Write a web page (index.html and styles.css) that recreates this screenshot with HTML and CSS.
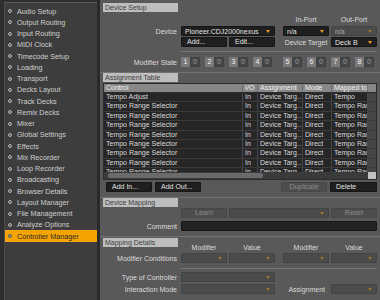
FILE: index.html
```html
<!DOCTYPE html>
<html>
<head>
<meta charset="utf-8">
<link rel="stylesheet" href="styles.css">
</head>
<body>
<div class="app">
  <aside class="side">
    <ul class="menu">
      <li class="item"><span class="dot"></span>Audio Setup</li>
      <li class="item"><span class="dot"></span>Output Routing</li>
      <li class="item"><span class="dot"></span>Input Routing</li>
      <li class="item"><span class="dot"></span>MIDI Clock</li>
      <li class="item"><span class="dot"></span>Timecode Setup</li>
      <li class="item"><span class="dot"></span>Loading</li>
      <li class="item"><span class="dot"></span>Transport</li>
      <li class="item"><span class="dot"></span>Decks Layout</li>
      <li class="item"><span class="dot"></span>Track Decks</li>
      <li class="item"><span class="dot"></span>Remix Decks</li>
      <li class="item"><span class="dot"></span>Mixer</li>
      <li class="item"><span class="dot"></span>Global Settings</li>
      <li class="item"><span class="dot"></span>Effects</li>
      <li class="item"><span class="dot"></span>Mix Recorder</li>
      <li class="item"><span class="dot"></span>Loop Recorder</li>
      <li class="item"><span class="dot"></span>Broadcasting</li>
      <li class="item"><span class="dot"></span>Browser Details</li>
      <li class="item"><span class="dot"></span>Layout Manager</li>
      <li class="item"><span class="dot"></span>File Management</li>
      <li class="item"><span class="dot"></span>Analyze Options</li>
      <li class="item active"><span class="dot"></span>Controller Manager</li>
    </ul>
  </aside>
  <div class="divider"></div>
  <main class="main">
    <section class="sec">
      <h2 class="title">Device Setup</h2>
      <div class="row mt2">
        <span class="colhead c3">In-Port</span>
        <span class="colhead c4">Out-Port</span>
      </div>
      <div class="row mt2">
        <span class="lab">Device</span>
        <div class="dd c12"><span class="val">Pioneer.CDJ2000nexus</span><i class="arr"></i></div>
        <div class="dd c3"><span class="val">n/a</span><i class="arr"></i></div>
        <div class="dd dis c4"><span class="val">n/a</span><i class="arr"></i></div>
      </div>
      <div class="row mt1">
        <button class="btn c1">Add...</button>
        <button class="btn c2">Edit...</button>
        <span class="colhead c3">Device Target</span>
        <div class="dd c4"><span class="val">Deck B</span><i class="arr"></i></div>
      </div>
      <div class="sep mt4"></div>
      <div class="row mt5">
        <span class="lab">Modifier State</span>
        <div class="mods c14">
          <div class="modgrp">
            <span class="mod"><b>1</b><em>0</em></span>
            <span class="mod"><b>2</b><em>0</em></span>
            <span class="mod"><b>3</b><em>0</em></span>
            <span class="mod"><b>4</b><em>0</em></span>
          </div>
          <div class="modgrp">
            <span class="mod"><b>5</b><em>0</em></span>
            <span class="mod"><b>6</b><em>0</em></span>
            <span class="mod"><b>7</b><em>0</em></span>
            <span class="mod"><b>8</b><em>0</em></span>
          </div>
        </div>
      </div>
    </section>

    <section class="sec">
      <h2 class="title">Assignment Table</h2>
      <div class="table">
        <div class="trow thead">
          <span class="cell">Control</span><span class="cell">I/O</span><span class="cell">Assignment</span><span class="cell">Mode</span><span class="cell">Mapped to</span><span class="cell vs"></span>
        </div>
        <div class="tbody">
          <div class="trow"><span class="cell">Tempo Adjust</span><span class="cell">In</span><span class="cell">Device Targ…</span><span class="cell">Direct</span><span class="cell">Tempo</span><span class="cell vs"></span></div>
          <div class="trow"><span class="cell">Tempo Range Selector</span><span class="cell">In</span><span class="cell">Device Targ…</span><span class="cell">Direct</span><span class="cell">Tempo Range</span><span class="cell vs"></span></div>
          <div class="trow"><span class="cell">Tempo Range Selector</span><span class="cell">In</span><span class="cell">Device Targ…</span><span class="cell">Direct</span><span class="cell">Tempo Range</span><span class="cell vs"></span></div>
          <div class="trow"><span class="cell">Tempo Range Selector</span><span class="cell">In</span><span class="cell">Device Targ…</span><span class="cell">Direct</span><span class="cell">Tempo Range</span><span class="cell vs"></span></div>
          <div class="trow"><span class="cell">Tempo Range Selector</span><span class="cell">In</span><span class="cell">Device Targ…</span><span class="cell">Direct</span><span class="cell">Tempo Range</span><span class="cell vs"></span></div>
          <div class="trow"><span class="cell">Tempo Range Selector</span><span class="cell">In</span><span class="cell">Device Targ…</span><span class="cell">Direct</span><span class="cell">Tempo Range</span><span class="cell vs"></span></div>
          <div class="trow"><span class="cell">Tempo Range Selector</span><span class="cell">In</span><span class="cell">Device Targ…</span><span class="cell">Direct</span><span class="cell">Tempo Range</span><span class="cell vs"></span></div>
          <div class="trow"><span class="cell">Tempo Range Selector</span><span class="cell">In</span><span class="cell">Device Targ…</span><span class="cell">Direct</span><span class="cell">Tempo Range</span><span class="cell vs"></span></div>
          <div class="trow"><span class="cell">Tempo Range Selector</span><span class="cell">In</span><span class="cell">Device Targ…</span><span class="cell">Direct</span><span class="cell">Tempo Range</span><span class="cell vs"></span></div>
        </div>
        <div class="hscroll"><span class="thumb"></span><span class="corner"></span></div>
      </div>
      <div class="btnrow">
        <div class="grp">
          <button class="btn w46">Add In...</button>
          <button class="btn w46">Add Out...</button>
        </div>
        <div class="grp">
          <button class="btn dis w46">Duplicate</button>
          <button class="btn w47">Delete</button>
        </div>
      </div>
    </section>

    <section class="sec">
      <h2 class="title">Device Mapping</h2>
      <div class="row mt1">
        <button class="btn dis c1">Learn</button>
        <div class="dd dis c23"><span class="val"></span><i class="arr"></i></div>
        <button class="btn dis c4">Reset</button>
      </div>
      <div class="row mt3">
        <span class="lab">Comment</span>
        <div class="input c14"></div>
      </div>
    </section>

    <section class="sec last">
      <div class="row headrow mt1">
        <h2 class="title intitle">Mapping Details</h2>
        <span class="colhead bottom c1">Modifier</span>
        <span class="colhead bottom c2">Value</span>
        <span class="colhead bottom c3">Modifier</span>
        <span class="colhead bottom c4">Value</span>
      </div>
      <div class="row mt1">
        <span class="lab">Modifier Conditions</span>
        <div class="dd dis c1"><span class="val"></span><i class="arr"></i></div>
        <div class="dd dis c2"><span class="val"></span><i class="arr"></i></div>
        <div class="dd dis c3"><span class="val"></span><i class="arr"></i></div>
        <div class="dd dis c4"><span class="val"></span><i class="arr"></i></div>
      </div>
      <div class="sep mt5"></div>
      <div class="row mt3">
        <span class="lab">Type of Controller</span>
        <div class="dd dis c12"><span class="val"></span><i class="arr"></i></div>
      </div>
      <div class="row mt2">
        <span class="lab">Interaction Mode</span>
        <div class="dd dis c12"><span class="val"></span><i class="arr"></i></div>
        <span class="lab2 c3">Assignment</span>
        <div class="dd dis c4"><span class="val"></span><i class="arr"></i></div>
      </div>
    </section>
  </main>
</div>
</body>
</html>
```

FILE: styles.css
```css
* { box-sizing: border-box; }
html, body {
  margin: 0;
  padding: 0;
  width: 380px;
  height: 300px;
  overflow: hidden;
  background: #595959;
}
body {
  font-family: "Liberation Sans", Arial, sans-serif;
  font-size: 7px;
  color: #dcdcdc;
}
.app {
  display: flex;
  width: 380px;
  height: 300px;
}

/* sidebar */
.side {
  width: 97px;
  flex: none;
  background: #2e2e2e;
  padding: 2px 0 0 4px;
}
.menu {
  list-style: none;
  margin: 0;
  padding: 2.4px 0 0 0;
  height: 100%;
  background: #3d3d3d;
  border-top: 1px solid #585858;
  border-left: 1px solid #4c4c4c;
}
.item {
  display: flex;
  align-items: center;
  height: 11.25px;
  padding-left: 3px;
  font-size: 7.2px;
  color: #cfcfcf;
  white-space: nowrap;
}
.dot {
  width: 4px;
  height: 4px;
  border-radius: 50%;
  border: 1px solid #b4b4b4;
  background: #5a5a5a;
  margin-right: 5px;
  flex: none;
}
.item.active {
  background: #f5a300;
  color: #2a2a2a;
}
.item.active .dot {
  border-color: #555;
  background: #a0a0a0;
}
.divider {
  width: 3px;
  flex: none;
  background: #2a2a2a;
}

/* main */
.main {
  flex: 1;
  padding-top: 3px;
  background: #595959;
}
.sec { padding-bottom: 5px; }
.sec + .sec { border-top: 1px solid #727272; }
.sec.last { padding-bottom: 0; }
.title {
  margin: 0 0 0 3px;
  width: 75px;
  height: 9px;
  line-height: 9px;
  padding-left: 2px;
  font-size: 7px;
  font-weight: normal;
  background: #bdbdbd;
  color: #3e3e3e;
}
.mt1 { margin-top: 1px; }
.mt2 { margin-top: 2px; }
.mt3 { margin-top: 3px; }
.mt4 { margin-top: 4px; }
.mt5 { margin-top: 5px; }

.row {
  display: grid;
  grid-template-columns: 77px 4px 46px 2px 46px 8px 46px 2px 46px;
  height: 10px;
  align-items: center;
}
.lab {
  grid-column: 1;
  text-align: right;
  white-space: nowrap;
  color: #dcdcdc;
}
.lab2 {
  text-align: right;
  padding-right: 4px;
  white-space: nowrap;
}
.c1 { grid-column: 3; }
.c2 { grid-column: 5; }
.c3 { grid-column: 7; }
.c4 { grid-column: 9; }
.c12 { grid-column: 3 / 6; }
.c23 { grid-column: 5 / 8; }
.c14 { grid-column: 3 / 10; }
.colhead {
  text-align: center;
  white-space: nowrap;
  color: #dcdcdc;
}

.dd {
  height: 10px;
  display: flex;
  align-items: center;
  background: #1f1f1f;
  border: 1px solid #161616;
  border-radius: 1px;
  padding-left: 3px;
  color: #e2e2e2;
  overflow: hidden;
  white-space: nowrap;
}
.dd .val { flex: 1; overflow: hidden; }
.arr {
  flex: none;
  width: 0;
  height: 0;
  border-left: 2.5px solid transparent;
  border-right: 2.5px solid transparent;
  border-top: 3px solid #f09a10;
  margin: 0 4px 0 2px;
}
.dd.dis {
  background: #4b4b4b;
  border-color: #434343;
  color: #aaa;
}
.dd.dis .arr { border-top-color: #9a7332; }

.btn {
  height: 10px;
  padding: 0 0 0 5px;
  margin: 0;
  font: inherit;
  text-align: left;
  background: #1f1f1f;
  border: 1px solid #161616;
  border-radius: 1px;
  color: #e2e2e2;
  line-height: 8px;
  white-space: nowrap;
}
.btn.dis {
  background: #4d4d4d;
  border-color: #474747;
  color: #8e8e8e;
  text-align: center;
  padding: 0;
}
.w46 { width: 46px; }
.w47 { width: 47px; }

.sep {
  margin-left: 81px;
  width: 196px;
  height: 1px;
  background: #747474;
}

.mods {
  display: flex;
  gap: 11px;
}
.modgrp {
  display: flex;
  gap: 5px;
}
.mod {
  display: flex;
  height: 10px;
  width: 19px;
}
.mod b {
  width: 9px;
  background: #7a7a7a;
  color: #f2f2f2;
  font-weight: normal;
  text-align: center;
  line-height: 10px;
}
.mod em {
  width: 10px;
  background: #474747;
  border: 1px solid #3f3f3f;
  color: #9a9a9a;
  font-style: normal;
  text-align: center;
  line-height: 8px;
}

/* table */
.table {
  margin: 1px 3px 0 3px;
  border: 1px solid #2c2c2c;
  height: 97px;
  background: #262626;
  overflow: hidden;
}
.trow {
  display: grid;
  grid-template-columns: 139px 15px 45px 29px 36px 1fr;
  height: 9.4px;
  border-bottom: 1px solid #3b3b3b;
}
.cell {
  padding-left: 2px;
  white-space: nowrap;
  overflow: hidden;
  border-right: 1px solid #474747;
  line-height: 8.4px;
  color: #dadada;
}
.thead {
  height: 9px;
  background: #878787;
  border-bottom: 1px solid #2c2c2c;
}
.thead .cell {
  color: #f2f2f2;
  border-right-color: #6e6e6e;
  line-height: 8px;
}
.cell.vs {
  border-right: none;
  background: #454545;
}
.thead .cell.vs { background: #878787; }
.tbody {
  height: 79px;
  overflow: hidden;
}
.hscroll {
  display: flex;
  height: 7px;
  background: #3a3a3a;
  padding: 1px 0 0 4px;
}
.thumb {
  width: 155px;
  height: 5px;
  background: #6a6a6a;
  border-radius: 2px;
}
.corner {
  margin-left: auto;
  width: 8px;
  height: 7px;
  margin-top: -1px;
  background: #c4c4c4;
}

.btnrow {
  display: flex;
  justify-content: space-between;
  margin: 2px 3px 0 6px;
  height: 10px;
}
.grp {
  display: flex;
  gap: 3px;
}

.input {
  height: 10px;
  background: #232323;
  border: 1px solid #161616;
  border-radius: 1px;
}

.headrow {
  height: 14px;
  align-items: end;
}
.intitle {
  grid-column: 1 / 3;
  grid-row: 1;
  align-self: start;
}
.colhead.bottom {
  grid-row: 1;
  line-height: 8px;
}
```
